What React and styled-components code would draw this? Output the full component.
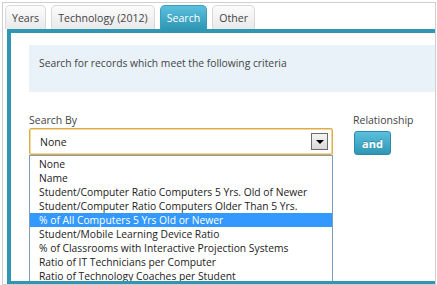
import React from 'react';
import styled, { createGlobalStyle } from 'styled-components';

const GlobalStyle = createGlobalStyle`
  html, body {
    margin: 0;
    padding: 0;
    background: #fff;
  }
  body {
    font-family: "Open Sans", "Liberation Sans", sans-serif;
    color: #333;
  }
`

const Page = styled.div`
  padding: 2px 1px 0 2px;
  width: 437px;
  height: 285px;
  box-sizing: border-box;
`

const Frame = styled.div`
  height: 283px;
  box-sizing: border-box;
  border: 1px solid #cfcfcf;
  display: flex;
  flex-direction: column;
  overflow: hidden;
`

const TabList = styled.div`
  display: flex;
  gap: 5px;
  padding: 2px 0 0 2px;
  height: 26px;
  box-sizing: border-box;
`

const Tab = styled.div`
  height: 24px;
  box-sizing: border-box;
  padding: 0 6px;
  display: flex;
  align-items: center;
  font-size: 10.6px;
  border: 1px solid ${p => (p.$active ? '#3a9fbd' : '#d9d9d9')};
  border-bottom: none;
  border-radius: 5px 5px 0 0;
  color: ${p => (p.$active ? '#fff' : '#444')};
  background: ${p => (p.$active
    ? 'linear-gradient(#5bc0de, #2f96b4)'
    : 'linear-gradient(#fcfcfc, #e9e9e9)')};
`

const Panel = styled.div`
  position: relative;
  flex: 1;
  margin-left: 4px;
  border-top: 4px solid #2f96b4;
  border-left: 4px solid #2f96b4;
  border-bottom: 3px solid #2f96b4;
  padding: 12px 0 0 18px;
  overflow: hidden;
`

const Notice = styled.div`
  height: 47px;
  box-sizing: border-box;
  padding: 11px 10px 0;
  background: #e8f2f8;
  font-size: 10.3px;
  line-height: 14px;
  color: #444;
`

const FormRow = styled.div`
  display: flex;
  gap: 20px;
  margin-top: 21px;
`

const Field = styled.div`
  position: relative;
  width: 304px;
`

const Label = styled.div`
  font-size: 10.5px;
  line-height: 14px;
  color: #444;
  margin-bottom: 1px;
`

const Select = styled.div`
  height: 27px;
  box-sizing: border-box;
  border: 1px solid #e2ab4a;
  box-shadow: inset 0 0 0 1px #f4d59a;
  border-radius: 2px;
  display: flex;
  align-items: center;
  justify-content: space-between;
  padding: 0 4px 0 10px;
  font-size: 10.5px;
  color: #222;
`

const ArrowBox = styled.div`
  width: 17px;
  height: 17px;
  box-sizing: border-box;
  border: 1px solid #6b6b6b;
  background: linear-gradient(#f4f4f4, #dadada);
  display: flex;
  align-items: center;
  justify-content: center;
`

const Arrow = styled.span`
  width: 0;
  height: 0;
  border-left: 4px solid transparent;
  border-right: 4px solid transparent;
  border-top: 4px solid #000;
`

const Options = styled.div`
  position: absolute;
  top: 100%;
  left: 0;
  width: 304px;
  box-sizing: border-box;
  border: 1px solid #7f9db9;
  padding-top: 1px;
  background: #fff;
  z-index: 2;
`

const Option = styled.div`
  height: 14px;
  line-height: 14px;
  padding-left: 9px;
  font-size: 10.3px;
  white-space: nowrap;
  color: ${p => (p.$selected ? '#fff' : '#222')};
  background: ${p => (p.$selected ? '#3399ff' : 'transparent')};
`

const Side = styled.div`
  display: flex;
  flex-direction: column;
`

const AndButton = styled.button`
  margin-top: 3px;
  margin-left: 1px;
  width: 37px;
  height: 24px;
  padding: 0;
  border: 1px solid #2a8aa8;
  border-radius: 3px;
  background: linear-gradient(#5bc0de, #2f96b4);
  color: #fff;
  font-family: "Open Sans", "Liberation Sans", sans-serif;
  font-weight: 700;
  font-size: 11px;
  text-shadow: 0 -1px 0 rgba(0, 0, 0, 0.25);
`

const tabs = ['Years', 'Technology (2012)', 'Search', 'Other'];

const options = [
  'None',
  'Name',
  'Student/Computer Ratio Computers 5 Yrs. Old of Newer',
  'Student/Computer Ratio Computers Older Than 5 Yrs.',
  '% of All Computers 5 Yrs Old or Newer',
  'Student/Mobile Learning Device Ratio',
  '% of Classrooms with Interactive Projection Systems',
  'Ratio of IT Technicians per Computer',
  'Ratio of Technology Coaches per Student',
];

export default function App() {
  return (
    <Page>
      <GlobalStyle />
      <Frame>
        <TabList>
          {tabs.map(t => <Tab key={t} $active={t === 'Search'}>{t}</Tab>)}
        </TabList>
        <Panel>
          <Notice>Search for records which meet the following criteria</Notice>
          <FormRow>
            <Field>
              <Label>Search By</Label>
              <Select>
                None
                <ArrowBox><Arrow /></ArrowBox>
              </Select>
              <Options>
                {options.map((o, i) => <Option key={i} $selected={i === 4}>{o}</Option>)}
              </Options>
            </Field>
            <Side>
              <Label>Relationship</Label>
              <AndButton>and</AndButton>
            </Side>
          </FormRow>
        </Panel>
      </Frame>
    </Page>
  );
}
